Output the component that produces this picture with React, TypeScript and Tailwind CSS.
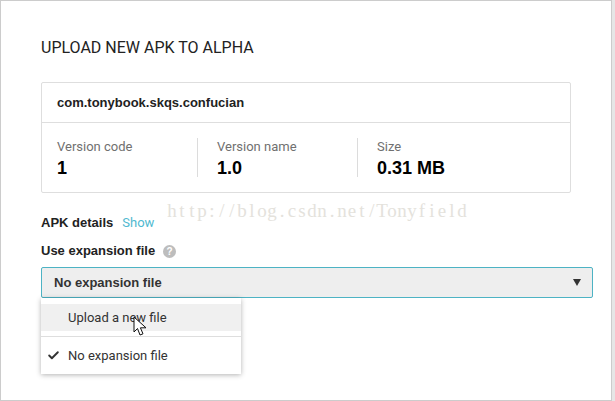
import { Check } from 'lucide-react';

const watermark = 'http://blog.csdn.net/Tonyfield';
const boldFont = "font-['Liberation_Sans',sans-serif] font-bold";

function Stat({ label, value, className }: { label: string; value: string; className: string }) {
  return (
    <div className={`h-[39px] ${className}`}>
      <div className="text-[13px] leading-[15px] text-[#707070] pt-[1px]">{label}</div>
      <div className={`mt-[4px] text-[18px] leading-[21px] text-black ${boldFont}`}>{value}</div>
    </div>
  );
}

export default function App() {
  return (
    <div className="relative w-[615px] h-[401px] bg-[#e6e6e6] overflow-hidden font-['Roboto','Liberation_Sans',sans-serif] text-[#333]">
      <div className="w-[612px] h-[401px] bg-white border border-[#ccc] pl-10 pt-[37px]">
        <h1 className="text-[16px] leading-[20px] text-[#222]">UPLOAD NEW APK TO ALPHA</h1>

        {/* apk summary card */}
        <div className="mt-[24px] w-[530px] h-[111px] border border-[#dedede] rounded-[2px]">
          <div className={`h-10 border-b border-[#dedede] pl-[15px] pt-[1px] flex items-center text-[13px] text-[#222] ${boldFont}`}>
            com.tonybook.skqs.confucian
          </div>
          <div className="flex pt-[15px]">
            <Stat label="Version code" value="1" className="w-[155px] pl-[15px]" />
            <Stat label="Version name" value="1.0" className="w-[160px] pl-[19px] border-l border-[#dcdcdc]" />
            <Stat label="Size" value="0.31 MB" className="w-[160px] pl-[19px] border-l border-[#dcdcdc]" />
          </div>
        </div>

        <div className="mt-[22px] flex items-center h-4 text-[13px]">
          <span className={`text-[#222] ${boldFont}`}>APK details</span>
          <span className="ml-[9px] text-[#4fb9d0]">Show</span>
        </div>

        <div className={`mt-[12px] flex items-center h-4 text-[13px] text-[#222] ${boldFont}`}>
          Use expansion file
          <span className="ml-2 w-[13px] h-[13px] rounded-full bg-[#bdbdbd] text-white text-[10px] leading-[13px] text-center">?</span>
        </div>

        <div className="relative mt-[8px] w-[552px]">
          <div className={`h-[31px] bg-[#eee] border border-[#4db3c4] rounded-[2px] pl-3 pr-[11px] flex items-center justify-between text-[13px] text-[#333] ${boldFont}`}>
            No expansion file
            <svg width="8" height="7" viewBox="0 0 8 7"><path d="M0 0h8L4 7z" fill="#333" /></svg>
          </div>

          {/* open dropdown */}
          <div className="absolute left-0 top-[31px] w-[200px] h-[76px] pt-[6px] bg-white shadow-[0_1px_5px_rgba(0,0,0,0.3)] text-[13px] text-[#333]">
            <div className="h-[27px] bg-[#f0f0f0] pl-[27px] flex items-center">Upload a new file</div>
            <div className="mt-[5px] border-t border-[#dedede] h-[38px] flex items-center pl-[6px]">
              <Check size={13} strokeWidth={3.5} className="text-[#333] mr-[8px]" />
              No expansion file
            </div>
          </div>
        </div>
      </div>

      {/* mouse pointer */}
      <svg className="absolute left-[133px] top-[316px]" width="15" height="21" viewBox="0 0 15 21">
        <path d="M1 1v15l3.5-3.5 2.5 6.5 3-1.2-2.6-6H13z" fill="#fff" stroke="#111" strokeWidth="1" />
      </svg>

      {/* blog watermark, serif glyphs in fixed 10px cells */}
      <div className="absolute left-[167px] top-[201px] flex font-['Liberation_Serif',serif] text-[19px] leading-[20px] text-[#e4e2dc] pointer-events-none">
        {watermark.split('').map((c, i) => (
          <span key={i} className="w-[10px] flex justify-center">{c}</span>
        ))}
      </div>
    </div>
  );
}
